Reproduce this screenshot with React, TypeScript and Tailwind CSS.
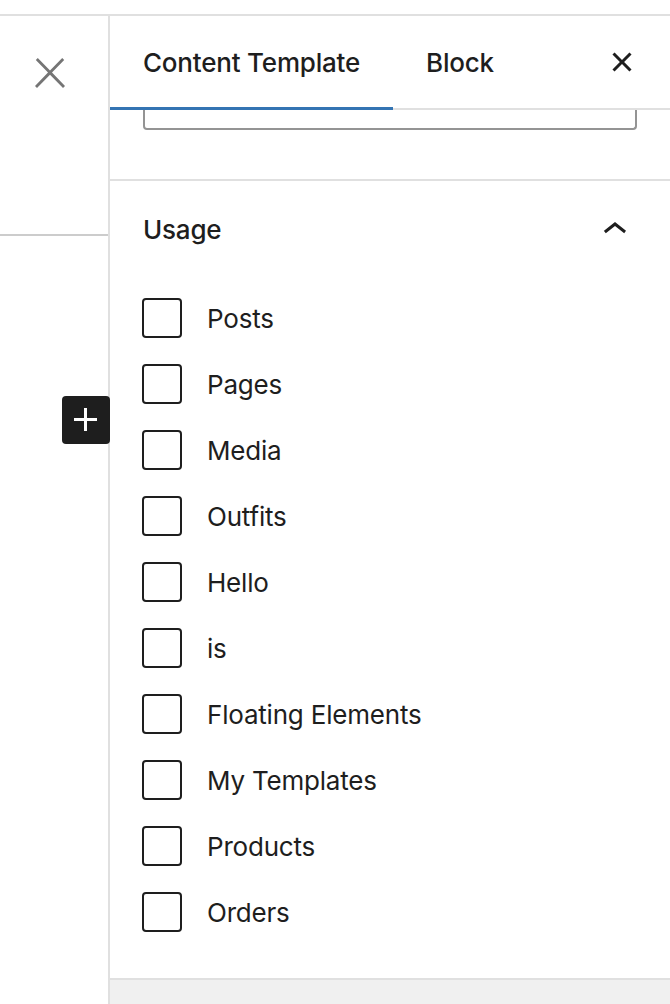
import { useState } from 'react';

const postTypes = [
  'Posts',
  'Pages',
  'Media',
  'Outfits',
  'Hello',
  'is',
  'Floating Elements',
  'My Templates',
  'Products',
  'Orders',
];

function CloseIcon({ className }: { className?: string }) {
  return (
    <svg viewBox="0 0 24 24" className={className} fill="currentColor">
      <path d="M13 11.8l6.1-6.3-1-1-6.1 6.2-6.1-6.2-1 1 6.1 6.3-6.5 6.7 1 1 6.5-6.6 6.5 6.6 1-1z" />
    </svg>
  );
}

function CloseSmallIcon({ className }: { className?: string }) {
  return (
    <svg viewBox="0 0 24 24" className={className} fill="currentColor">
      <path d="M12 13.06l3.712 3.713 1.061-1.06L13.061 12l3.713-3.712-1.06-1.06L12 10.938 8.288 7.227l-1.061 1.06L10.939 12l-3.712 3.712 1.06 1.061L12 13.061z" />
    </svg>
  );
}

function ChevronUpIcon({ className }: { className?: string }) {
  return (
    <svg viewBox="0 0 24 24" className={className} fill="currentColor">
      <path d="M6.5 12.4L12 8l5.5 4.4-.9 1.2L12 10l-4.6 3.6-1-1.2z" />
    </svg>
  );
}

function PlusIcon({ className }: { className?: string }) {
  return (
    <svg viewBox="0 0 24 24" className={className} fill="currentColor">
      <path d="M11 12.5V17.5H12.5V12.5H17.5V11H12.5V6H11V11H6V12.5H11Z" />
    </svg>
  );
}

export default function App() {
  const [activeTab, setActiveTab] = useState<'template' | 'block'>('template');
  const [checked, setChecked] = useState<Record<string, boolean>>({});

  return (
    <div className="relative w-[670px] h-[1004px] bg-white text-[#1e1e1e] font-['Inter',sans-serif] flex flex-col overflow-hidden">
      <div className="h-[14px] shrink-0" />

      <div className="flex flex-1 border-t-2 border-[#e0e0e0]">
        {/* Left editor strip */}
        <aside className="w-[110px] shrink-0 border-r-2 border-[#e0e0e0]">
          <div className="h-[220px] border-b-2 border-[#cccccc] pt-[33px] pl-[26px]">
            <button aria-label="Close" className="w-12 h-12 text-[#757575]">
              <CloseIcon className="w-12 h-12" />
            </button>
          </div>
        </aside>

        {/* Settings sidebar */}
        <section className="flex-1 flex flex-col min-w-0">
          <header className="h-[94px] shrink-0 flex items-stretch border-b-2 border-[#e0e0e0]">
            <button
              onClick={() => setActiveTab('template')}
              className="relative px-[33px] flex items-center text-[26px] font-medium tracking-[-0.2px]"
            >
              Content Template
              {activeTab === 'template' && (
                <span className="absolute left-0 right-0 -bottom-[2px] h-[3px] bg-[#3474b3]" />
              )}
            </button>
            <button
              onClick={() => setActiveTab('block')}
              className="relative px-[33px] flex items-center text-[26px] font-medium tracking-[-0.2px]"
            >
              Block
              {activeTab === 'block' && (
                <span className="absolute left-0 right-0 -bottom-[2px] h-[3px] bg-[#3474b3]" />
              )}
            </button>
            <div className="ml-auto mr-[24px] flex items-center">
              <button aria-label="Close settings" className="w-12 h-12">
                <CloseSmallIcon className="w-12 h-12" />
              </button>
            </div>
          </header>

          {/* Bottom edge of the scrolled field */}
          <div className="px-[33px] shrink-0">
            <div className="h-[20px] border-2 border-t-0 border-[#949494] rounded-b-[4px]" />
          </div>

          <div className="h-[49px] shrink-0 border-b-2 border-[#e0e0e0] box-content" />

          <div className="flex-1 pl-[32px] pr-[33px] pt-[25px] border-b-2 border-[#e0e0e0]">
            <div className="h-12 flex items-center justify-between pl-px">
              <h2 className="text-[26px] font-medium tracking-[-0.2px] -mt-[2px]">Usage</h2>
              <ChevronUpIcon className="w-12 h-12 -mr-[2px]" />
            </div>

            <ul className="mt-[44px] flex flex-col gap-[26px]">
              {postTypes.map((type) => (
                <li key={type} className="flex items-center gap-[25px]">
                  <button
                    role="checkbox"
                    aria-checked={!!checked[type]}
                    onClick={() => setChecked((prev) => ({ ...prev, [type]: !prev[type] }))}
                    className="w-10 h-10 shrink-0 border-2 border-[#1e1e1e] rounded-[4px] bg-white"
                  />
                  <span className="text-[26px] tracking-[-0.2px]">{type}</span>
                </li>
              ))}
            </ul>
          </div>

          <div className="h-[24px] shrink-0 bg-[#f0f0f0]" />
        </section>
      </div>

      {/* Block inserter */}
      <button
        aria-label="Add block"
        className="absolute left-[62px] top-[396px] w-12 h-12 rounded-[4px] bg-[#1e1e1e] text-white flex items-center justify-center"
      >
        <PlusIcon className="w-12 h-12" />
      </button>
    </div>
  );
}
